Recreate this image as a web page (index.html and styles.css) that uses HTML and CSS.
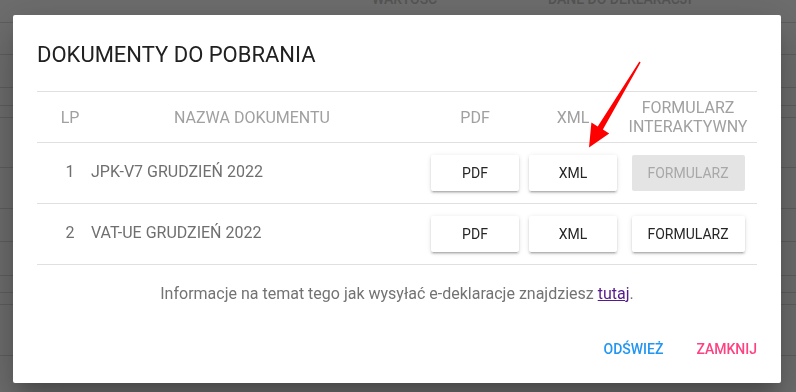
FILE: index.html
```html
<!DOCTYPE html>
<html lang="pl">

<head>
    <meta charset="UTF-8">
    <meta name="viewport" content="width=device-width, initial-scale=1.0">
    <title>Deklaracje</title>
    <link rel="stylesheet" href="styles.css">
</head>

<body>
    <div class="page">
        <div class="page-head">
            <span class="col-value">WARTOŚĆ</span>
            <span class="col-data">DANE DO DEKLARACJI</span>
        </div>
        <div class="page-row r1"></div>
        <div class="page-row r2"></div>
        <div class="page-row r3"></div>
        <div class="page-row r4"></div>
        <div class="page-row r5"></div>
        <div class="page-row r6"></div>
        <div class="page-row r7"></div>
        <div class="page-row r8"></div>
        <div class="page-row r9"></div>
        <div class="page-row r10"></div>
        <div class="page-row r11"></div>
    </div>

    <div class="backdrop"></div>

    <div class="dialog">
        <h2 class="dialog-title">DOKUMENTY DO POBRANIA</h2>

        <div class="docs">
            <div class="docs-row docs-head">
                <div class="cell lp">LP</div>
                <div class="cell name">NAZWA DOKUMENTU</div>
                <div class="cell">PDF</div>
                <div class="cell">XML</div>
                <div class="cell">FORMULARZ<br>INTERAKTYWNY</div>
            </div>
            <div class="docs-row">
                <div class="cell lp">1</div>
                <div class="cell name">JPK-V7 GRUDZIEŃ 2022</div>
                <div class="cell"><button class="btn">PDF</button></div>
                <div class="cell"><button class="btn">XML</button></div>
                <div class="cell"><button class="btn btn-wide" disabled>FORMULARZ</button></div>
            </div>
            <div class="docs-row">
                <div class="cell lp">2</div>
                <div class="cell name">VAT-UE GRUDZIEŃ 2022</div>
                <div class="cell"><button class="btn">PDF</button></div>
                <div class="cell"><button class="btn">XML</button></div>
                <div class="cell"><button class="btn btn-wide">FORMULARZ</button></div>
            </div>
        </div>

        <p class="info">Informacje na temat tego jak wysyłać e-deklaracje znajdziesz <a href="#">tutaj</a>.</p>

        <div class="actions">
            <button class="flat refresh">ODŚWIEŻ</button>
            <button class="flat close">ZAMKNIJ</button>
        </div>
    </div>

    <svg class="annotation" width="796" height="392" viewBox="0 0 796 392">
        <polygon fill="#ff0000" points="639.4,61.6 640.6,62.4 602.9,129.6 609.2,133.6 589,147.5 591.4,122.6 597.7,126.6" />
    </svg>
</body>

</html>
```

FILE: styles.css
```css
body {
    margin: 0;
    font-family: Roboto, "Liberation Sans", sans-serif;
    background: #fff;
    overflow: hidden;
}

/* page behind the dialog */
.page {
    width: 796px;
    height: 392px;
}

.page-head {
    height: 23px;
    border-bottom: 1px solid #dcdcdc;
    box-sizing: border-box;
    position: relative;
    font-size: 14px;
    font-weight: 500;
    color: #c6c6c6;
}

.page-head span {
    position: absolute;
    top: -9px;
}

.col-value {
    left: 372px;
}

.col-data {
    left: 548px;
}

.page-row {
    border-bottom: 1px solid #dcdcdc;
    box-sizing: border-box;
}

.r1 { height: 32px; }
.r2 { height: 33px; }
.r3 { height: 18px; }
.r4 { height: 12px; }
.r5 { height: 50px; }
.r6 { height: 41px; }
.r7 { height: 33px; }
.r8 { height: 34px; }
.r9 { height: 17px; }
.r10 { height: 12px; }
.r11 { height: 51px; }

.backdrop {
    position: fixed;
    inset: 0;
    background: rgba(0, 0, 0, 0.57);
}

/* dialog */
.dialog {
    position: absolute;
    left: 13px;
    top: 15px;
    width: 768px;
    height: 368px;
    box-sizing: border-box;
    padding: 24px 24px 0;
    background: #fff;
    border-radius: 2px;
    box-shadow: 0 11px 15px -7px rgba(0, 0, 0, 0.2), 0 24px 38px 3px rgba(0, 0, 0, 0.14), 0 9px 46px 8px rgba(0, 0, 0, 0.12);
    display: flex;
    flex-direction: column;
}

.dialog-title {
    margin: 0 0 20px;
    font-size: 22px;
    font-weight: 400;
    line-height: 32px;
    color: #212121;
}

.docs {
    border-top: 1px solid #e0e0e0;
}

.docs-row {
    display: grid;
    grid-template-columns: 44px 342px 104px 92px 138px;
    height: 61px;
    border-bottom: 1px solid #e0e0e0;
    box-sizing: border-box;
    align-items: center;
    font-size: 16px;
    color: #6f6f6f;
}

.docs-head {
    height: 51px;
    color: #a0a0a0;
    line-height: 19px;
}

.cell {
    text-align: center;
}

.cell.lp {
    padding-left: 22px;
}

.cell.name {
    text-align: left;
    padding-left: 10px;
}

.docs-row:not(.docs-head) .lp,
.docs-row:not(.docs-head) .name {
    padding-bottom: 3px;
}

.docs-head .cell.name {
    text-align: center;
    padding-left: 0;
}

.btn {
    width: 88px;
    height: 36px;
    border: none;
    border-radius: 2px;
    background: #fff;
    font-family: inherit;
    font-size: 14px;
    font-weight: 400;
    color: #262626;
    box-shadow: 0 2px 2px 0 rgba(0, 0, 0, 0.14), 0 3px 1px -2px rgba(0, 0, 0, 0.12), 0 1px 5px 0 rgba(0, 0, 0, 0.12);
    cursor: pointer;
}

.btn-wide {
    width: 113px;
}

.btn:disabled {
    background: #e4e4e4;
    color: #a8a8a8;
    box-shadow: none;
}

.info {
    margin: 19px 0 0;
    text-align: center;
    font-size: 16px;
    line-height: 20px;
    color: #737373;
}

.info a {
    color: #551a8b;
}

.actions {
    margin-top: auto;
    height: 52px;
    display: flex;
    justify-content: flex-end;
    align-items: center;
    gap: 33px;
    padding-bottom: 8px;
}

.flat {
    border: none;
    background: none;
    padding: 0;
    font-family: inherit;
    font-size: 14px;
    font-weight: 500;
    cursor: pointer;
}

.refresh {
    color: #2196f3;
}

.close {
    color: #ff4081;
}

.annotation {
    position: absolute;
    left: 0;
    top: 0;
    pointer-events: none;
}
```
